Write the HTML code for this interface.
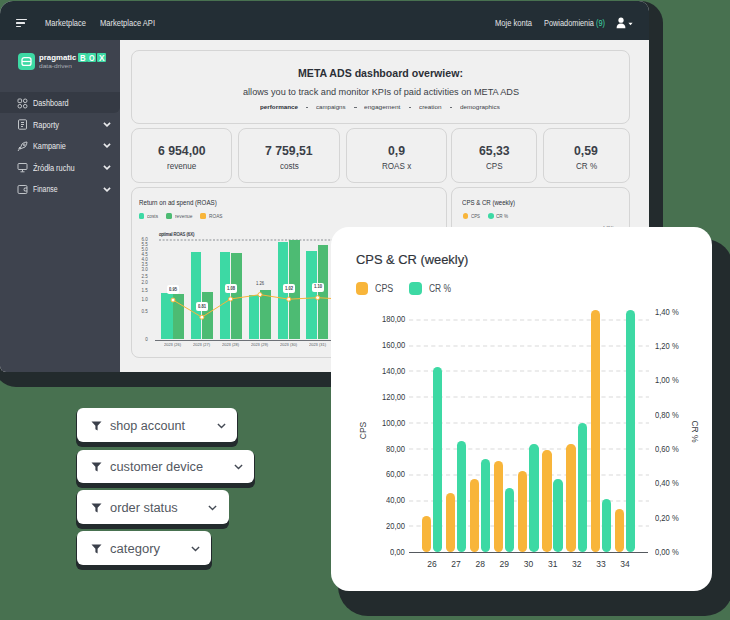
<!DOCTYPE html>
<html><head><meta charset="utf-8"><style>
html,body{margin:0;padding:0;}
body{width:730px;height:620px;overflow:hidden;position:relative;background:#487150;font-family:"Liberation Sans",sans-serif;}
.r{position:absolute;}
.t{position:absolute;white-space:nowrap;transform-origin:0 50%;}
</style></head><body>
<div class="r" style="left:-6.00px;top:30.00px;width:669.00px;height:357.00px;background:#232b2d;border-radius:0 0 22px 22px;"></div>
<div class="r" style="left:30.00px;top:1.00px;width:633.00px;height:59.00px;background:#232b2d;border-radius:0 22px 0 0;"></div>
<div class="r" style="left:0.00px;top:1.00px;width:649.00px;height:370.50px;background:#f0f0f0;border-radius:13px 10px 0 6px;overflow:hidden;"></div>
<div class="r" style="left:0.00px;top:1.00px;width:649.00px;height:39.00px;background:#232e35;border-radius:13px 10px 0 0;"></div>
<div class="r" style="left:0.00px;top:40.00px;width:119.50px;height:331.80px;background:#3e434e;border-radius:0 0 0 6px;"></div>
<div class="r" style="left:16.40px;top:19.10px;width:10.70px;height:1.30px;background:#e6e8ea;border-radius:0.6px;"></div>
<div class="r" style="left:16.40px;top:22.40px;width:8.30px;height:1.30px;background:#e6e8ea;border-radius:0.6px;"></div>
<div class="r" style="left:16.40px;top:25.70px;width:4.20px;height:1.30px;background:#e6e8ea;border-radius:0.6px;"></div>
<div class="t" style="left:45.00px;top:19.30px;font-size:8.5px;line-height:8.5px;color:#e3e6e8;font-weight:400;transform:scaleX(0.8855)">Marketplace</div>
<div class="t" style="left:100.00px;top:19.30px;font-size:8.5px;line-height:8.5px;color:#e3e6e8;font-weight:400;transform:scaleX(0.8886)">Marketplace API</div>
<div class="t" style="left:495.00px;top:19.30px;font-size:8.5px;line-height:8.5px;color:#e3e6e8;font-weight:400;transform:scaleX(0.8899)">Moje konta</div>
<div class="t" style="left:544.00px;top:19.30px;font-size:8.5px;line-height:8.5px;color:#e3e6e8;font-weight:400;transform:scaleX(0.8665)">Powiadomienia <span style="color:#3dd9a4">(9)</span></div>
<svg class="r" style="left:616px;top:17px" width="18" height="12" viewBox="0 0 18 12"><circle cx="5" cy="3.2" r="2.6" fill="#fff"/><path d="M0.6 11.2 Q0.6 6.6 5 6.6 Q9.4 6.6 9.4 11.2 Z" fill="#fff"/><path d="M12.4 5.8 L16.6 5.8 L14.5 8.3 Z" fill="#fff"/></svg>
<div class="r" style="left:18.30px;top:52.80px;width:17.00px;height:17.00px;background:#3dd9a4;border-radius:4px;"></div>
<svg class="r" style="left:18.3px;top:52.8px" width="17" height="17" viewBox="0 0 17 17"><rect x="4" y="4.6" width="9" height="7.8" rx="2.2" fill="none" stroke="#fff" stroke-width="1.3"/><line x1="4" y1="8.5" x2="13" y2="8.5" stroke="#fff" stroke-width="1.2"/></svg>
<div class="t" style="left:38.60px;top:53.87px;font-size:7.6px;line-height:7.6px;color:#ffffff;font-weight:700;transform:scaleX(1.0296)">pragmatic</div>
<div class="r" style="left:78.00px;top:53.10px;width:8.80px;height:9.00px;background:#3dd9a4;border-radius:1px;"></div>
<div class="t" style="left:79.60px;top:53.77px;font-size:8.3px;line-height:8.3px;color:#ffffff;font-weight:700;transform:scaleX(0.9342)">B</div>
<div class="r" style="left:87.45px;top:53.10px;width:8.80px;height:9.00px;background:#3dd9a4;border-radius:1px;"></div>
<div class="t" style="left:89.05px;top:53.77px;font-size:8.3px;line-height:8.3px;color:#ffffff;font-weight:700;transform:scaleX(0.8674)">O</div>
<div class="r" style="left:96.90px;top:53.10px;width:8.80px;height:9.00px;background:#3dd9a4;border-radius:1px;"></div>
<div class="t" style="left:98.50px;top:53.77px;font-size:8.3px;line-height:8.3px;color:#ffffff;font-weight:700;transform:scaleX(1.0115)">X</div>
<div class="t" style="left:38.60px;top:63.42px;font-size:6px;line-height:6px;color:#a9aeb5;font-weight:400;transform:scaleX(1.0960)">data-driven</div>
<div class="r" style="left:0.00px;top:92.40px;width:119.50px;height:20.80px;background:#353a44;border-radius:0 0 6px 0;"></div>
<div class="t" style="left:33.40px;top:99.00px;font-size:8.5px;line-height:8.5px;color:#e9eaec;font-weight:400;transform:scaleX(0.8561)">Dashboard</div>
<div class="t" style="left:33.40px;top:120.50px;font-size:8.5px;line-height:8.5px;color:#e9eaec;font-weight:400;transform:scaleX(0.8736)">Raporty</div>
<div class="t" style="left:33.40px;top:142.20px;font-size:8.5px;line-height:8.5px;color:#e9eaec;font-weight:400;transform:scaleX(0.8569)">Kampanie</div>
<div class="t" style="left:33.40px;top:163.60px;font-size:8.5px;line-height:8.5px;color:#e9eaec;font-weight:400;transform:scaleX(0.8739)">Źródła ruchu</div>
<div class="t" style="left:33.40px;top:185.30px;font-size:8.5px;line-height:8.5px;color:#e9eaec;font-weight:400;transform:scaleX(0.8102)">Finanse</div>
<svg class="r" style="left:17px;top:98px" width="11" height="11" viewBox="0 0 11 11" fill="none" stroke="#cfd2d6" stroke-width="0.9"><rect x="1" y="1" width="3.6" height="3.6" rx="0.8"/><rect x="6.4" y="1" width="3.6" height="3.6" rx="1.8"/><rect x="1" y="6.4" width="3.6" height="3.6" rx="1.8"/><rect x="6.4" y="6.4" width="3.6" height="3.6" rx="1.8"/></svg>
<svg class="r" style="left:17px;top:119px" width="11" height="11" viewBox="0 0 11 11" fill="none" stroke="#cfd2d6" stroke-width="0.9"><rect x="1.5" y="0.8" width="8" height="9.4" rx="1"/><line x1="4" y1="3.5" x2="7" y2="3.5"/><line x1="4" y1="5.5" x2="7" y2="5.5"/><line x1="4" y1="7.5" x2="6" y2="7.5"/></svg>
<svg class="r" style="left:17px;top:141px" width="11" height="11" viewBox="0 0 11 11" fill="none" stroke="#cfd2d6" stroke-width="0.9"><path d="M3 8 L5 3 Q7 1 10 1 Q10 4 8 6 L3 8 Z"/><circle cx="7.2" cy="3.8" r="0.9"/><path d="M1 10 L3 7"/><path d="M1.5 7.5 L3 6"/></svg>
<svg class="r" style="left:17px;top:162px" width="11" height="11" viewBox="0 0 11 11" fill="none" stroke="#cfd2d6" stroke-width="0.9"><rect x="1" y="1.5" width="9" height="6" rx="1"/><line x1="5.5" y1="7.5" x2="5.5" y2="9.5"/><line x1="3.5" y1="9.8" x2="7.5" y2="9.8"/></svg>
<svg class="r" style="left:17px;top:184px" width="11" height="11" viewBox="0 0 11 11" fill="none" stroke="#cfd2d6" stroke-width="0.9"><rect x="1" y="1.5" width="9" height="8" rx="1.2"/><path d="M10 4 L7.5 4 Q6.5 5.5 7.5 7 L10 7"/></svg>
<svg class="r" style="left:103px;top:121.7px" width="8" height="5" viewBox="0 0 8 5"><path d="M0.9 0.9 L4 3.9 L7.1 0.9" fill="none" stroke="#e9eaec" stroke-width="1.6"/></svg>
<svg class="r" style="left:103px;top:143.4px" width="8" height="5" viewBox="0 0 8 5"><path d="M0.9 0.9 L4 3.9 L7.1 0.9" fill="none" stroke="#e9eaec" stroke-width="1.6"/></svg>
<svg class="r" style="left:103px;top:164.8px" width="8" height="5" viewBox="0 0 8 5"><path d="M0.9 0.9 L4 3.9 L7.1 0.9" fill="none" stroke="#e9eaec" stroke-width="1.6"/></svg>
<svg class="r" style="left:103px;top:186.5px" width="8" height="5" viewBox="0 0 8 5"><path d="M0.9 0.9 L4 3.9 L7.1 0.9" fill="none" stroke="#e9eaec" stroke-width="1.6"/></svg>
<div class="r" style="left:131.40px;top:50.00px;width:498.60px;height:73.50px;background:#f0f0f0;border:1px solid #d5d5d5;border-radius:8px;box-sizing:border-box;"></div>
<div class="t" style="left:297.70px;top:67.77px;font-size:11.5px;line-height:11.5px;color:#2b2f36;font-weight:700;transform:scaleX(0.9206)">META ADS dashboard overwiew:</div>
<div class="t" style="left:242.50px;top:87.58px;font-size:9px;line-height:9px;color:#3a3e46;font-weight:400;transform:scaleX(1.0167)">allows you to track and monitor KPIs of paid activities on META ADS</div>
<div class="t" style="left:260.30px;top:104.35px;font-size:6.2px;line-height:6.2px;color:#2b2f36;font-weight:700;transform:scaleX(1.0144)">performance</div>
<div class="t" style="left:316.20px;top:104.35px;font-size:6.2px;line-height:6.2px;color:#3a3e46;font-weight:400;transform:scaleX(0.9872)">campaigns</div>
<div class="t" style="left:364.30px;top:104.35px;font-size:6.2px;line-height:6.2px;color:#3a3e46;font-weight:400;transform:scaleX(1.0559)">engagement</div>
<div class="t" style="left:418.80px;top:104.35px;font-size:6.2px;line-height:6.2px;color:#3a3e46;font-weight:400;transform:scaleX(1.0200)">creation</div>
<div class="t" style="left:459.80px;top:104.35px;font-size:6.2px;line-height:6.2px;color:#3a3e46;font-weight:400;transform:scaleX(1.0245)">demographics</div>
<div class="r" style="left:306.10px;top:106.90px;width:2.40px;height:0.70px;background:#6a6e74;"></div>
<div class="r" style="left:354.20px;top:106.90px;width:2.40px;height:0.70px;background:#6a6e74;"></div>
<div class="r" style="left:408.80px;top:106.90px;width:2.40px;height:0.70px;background:#6a6e74;"></div>
<div class="r" style="left:449.70px;top:106.90px;width:2.40px;height:0.70px;background:#6a6e74;"></div>
<div class="r" style="left:131.40px;top:127.80px;width:101.10px;height:55.60px;background:#f0f0f0;border:1px solid #d5d5d5;border-radius:8px;box-sizing:border-box;"></div>
<div class="t" style="left:158.11px;top:144.72px;font-size:12.5px;line-height:12.5px;color:#3b3f48;font-weight:700;transform:scaleX(0.9800)">6 954,00</div>
<div class="t" style="left:167.36px;top:162.00px;font-size:8.5px;line-height:8.5px;color:#3b3f48;font-weight:400;transform:scaleX(0.9500)">revenue</div>
<div class="r" style="left:238.20px;top:127.80px;width:101.50px;height:55.60px;background:#f0f0f0;border:1px solid #d5d5d5;border-radius:8px;box-sizing:border-box;"></div>
<div class="t" style="left:265.11px;top:144.72px;font-size:12.5px;line-height:12.5px;color:#3b3f48;font-weight:700;transform:scaleX(0.9800)">7 759,51</div>
<div class="t" style="left:279.53px;top:162.00px;font-size:8.5px;line-height:8.5px;color:#3b3f48;font-weight:400;transform:scaleX(0.9500)">costs</div>
<div class="r" style="left:345.80px;top:127.80px;width:101.50px;height:55.60px;background:#f0f0f0;border:1px solid #d5d5d5;border-radius:8px;box-sizing:border-box;"></div>
<div class="t" style="left:388.04px;top:144.72px;font-size:12.5px;line-height:12.5px;color:#3b3f48;font-weight:700;transform:scaleX(0.9800)">0,9</div>
<div class="t" style="left:381.97px;top:162.00px;font-size:8.5px;line-height:8.5px;color:#3b3f48;font-weight:400;transform:scaleX(0.9500)">ROAS x</div>
<div class="r" style="left:450.90px;top:127.80px;width:86.50px;height:55.60px;background:#f0f0f0;border:1px solid #d5d5d5;border-radius:8px;box-sizing:border-box;"></div>
<div class="t" style="left:478.82px;top:144.72px;font-size:12.5px;line-height:12.5px;color:#3b3f48;font-weight:700;transform:scaleX(0.9800)">65,33</div>
<div class="t" style="left:485.85px;top:162.00px;font-size:8.5px;line-height:8.5px;color:#3b3f48;font-weight:400;transform:scaleX(0.9500)">CPS</div>
<div class="r" style="left:542.80px;top:127.80px;width:86.90px;height:55.60px;background:#f0f0f0;border:1px solid #d5d5d5;border-radius:8px;box-sizing:border-box;"></div>
<div class="t" style="left:574.33px;top:144.72px;font-size:12.5px;line-height:12.5px;color:#3b3f48;font-weight:700;transform:scaleX(0.9800)">0,59</div>
<div class="t" style="left:575.71px;top:162.00px;font-size:8.5px;line-height:8.5px;color:#3b3f48;font-weight:400;transform:scaleX(0.9500)">CR %</div>
<div class="r" style="left:131.40px;top:187.20px;width:316.10px;height:170.80px;background:#f0f0f0;border:1px solid #d5d5d5;border-radius:8px;box-sizing:border-box;"></div>
<div class="r" style="left:450.80px;top:187.20px;width:179.50px;height:170.80px;background:#f0f0f0;border:1px solid #d5d5d5;border-radius:8px;box-sizing:border-box;"></div>
<div class="t" style="left:138.80px;top:199.37px;font-size:7px;line-height:7px;color:#2b2f36;font-weight:400;transform:scaleX(0.8836)">Return on ad spend (ROAS)</div>
<div class="r" style="left:138.50px;top:213.20px;width:5.50px;height:5.50px;background:#3dd9a4;border-radius:1.5px;"></div>
<div class="t" style="left:147.00px;top:213.54px;font-size:5.5px;line-height:5.5px;color:#555a62;font-weight:400;transform:scaleX(0.8569)">costs</div>
<div class="r" style="left:166.00px;top:213.20px;width:5.50px;height:5.50px;background:#4dbb73;border-radius:1.5px;"></div>
<div class="t" style="left:174.50px;top:213.54px;font-size:5.5px;line-height:5.5px;color:#555a62;font-weight:400;transform:scaleX(0.8804)">revenue</div>
<div class="r" style="left:200.00px;top:213.20px;width:5.50px;height:5.50px;background:#f8b53a;border-radius:1.5px;"></div>
<div class="t" style="left:208.50px;top:213.54px;font-size:5.5px;line-height:5.5px;color:#555a62;font-weight:400;transform:scaleX(0.8661)">ROAS</div>
<div class="t" style="left:158.70px;top:232.27px;font-size:5px;line-height:5px;color:#3b3f48;font-weight:400;-webkit-text-stroke:0.2px #3b3f48;transform:scaleX(0.8303)">optimal ROAS (6X)</div>
<svg class="r" style="left:158.7px;top:239px" width="173" height="2"><line x1="0" y1="1" x2="173" y2="1" stroke="#8a8e93" stroke-width="1" stroke-dasharray="2 1.6"/></svg>
<div class="t" style="left:141.54px;top:238.39px;font-size:4.5px;line-height:4.5px;color:#555a62;font-weight:400;transform:scaleX(1.0000)">6.0</div>
<div class="t" style="left:141.54px;top:243.19px;font-size:4.5px;line-height:4.5px;color:#555a62;font-weight:400;transform:scaleX(1.0000)">5.5</div>
<div class="t" style="left:141.54px;top:247.99px;font-size:4.5px;line-height:4.5px;color:#555a62;font-weight:400;transform:scaleX(1.0000)">5.0</div>
<div class="t" style="left:141.54px;top:252.69px;font-size:4.5px;line-height:4.5px;color:#555a62;font-weight:400;transform:scaleX(1.0000)">4.5</div>
<div class="t" style="left:141.54px;top:257.79px;font-size:4.5px;line-height:4.5px;color:#555a62;font-weight:400;transform:scaleX(1.0000)">4.0</div>
<div class="t" style="left:141.54px;top:262.79px;font-size:4.5px;line-height:4.5px;color:#555a62;font-weight:400;transform:scaleX(1.0000)">3.5</div>
<div class="t" style="left:141.54px;top:268.19px;font-size:4.5px;line-height:4.5px;color:#555a62;font-weight:400;transform:scaleX(1.0000)">3.0</div>
<div class="t" style="left:141.54px;top:274.79px;font-size:4.5px;line-height:4.5px;color:#555a62;font-weight:400;transform:scaleX(1.0000)">2.5</div>
<div class="t" style="left:141.54px;top:281.19px;font-size:4.5px;line-height:4.5px;color:#555a62;font-weight:400;transform:scaleX(1.0000)">2.0</div>
<div class="t" style="left:141.54px;top:289.09px;font-size:4.5px;line-height:4.5px;color:#555a62;font-weight:400;transform:scaleX(1.0000)">1.5</div>
<div class="t" style="left:141.54px;top:297.79px;font-size:4.5px;line-height:4.5px;color:#555a62;font-weight:400;transform:scaleX(1.0000)">1.0</div>
<div class="t" style="left:141.54px;top:309.89px;font-size:4.5px;line-height:4.5px;color:#555a62;font-weight:400;transform:scaleX(1.0000)">0.5</div>
<div class="t" style="left:145.30px;top:338.39px;font-size:4.5px;line-height:4.5px;color:#555a62;font-weight:400;transform:scaleX(1.0000)">0</div>
<div class="r" style="left:154.50px;top:339.60px;width:176.50px;height:1.00px;background:#6d7177;"></div>
<div class="r" style="left:161.40px;top:292.70px;width:11.20px;height:46.80px;background:#3dd9a4;"></div>
<div class="r" style="left:173.40px;top:294.20px;width:10.60px;height:45.30px;background:#4dbb73;"></div>
<div class="r" style="left:190.80px;top:252.30px;width:10.50px;height:87.20px;background:#3dd9a4;"></div>
<div class="r" style="left:202.10px;top:291.70px;width:10.90px;height:47.80px;background:#4dbb73;"></div>
<div class="r" style="left:219.70px;top:252.30px;width:10.30px;height:87.20px;background:#3dd9a4;"></div>
<div class="r" style="left:230.80px;top:253.30px;width:11.20px;height:86.20px;background:#4dbb73;"></div>
<div class="r" style="left:248.90px;top:295.20px;width:10.50px;height:44.30px;background:#3dd9a4;"></div>
<div class="r" style="left:260.20px;top:290.40px;width:10.70px;height:49.10px;background:#4dbb73;"></div>
<div class="r" style="left:277.80px;top:241.80px;width:10.20px;height:97.70px;background:#3dd9a4;"></div>
<div class="r" style="left:288.80px;top:240.10px;width:10.80px;height:99.40px;background:#4dbb73;"></div>
<div class="r" style="left:306.10px;top:251.20px;width:10.90px;height:88.30px;background:#3dd9a4;"></div>
<div class="r" style="left:317.80px;top:245.30px;width:10.70px;height:94.20px;background:#4dbb73;"></div>
<div class="t" style="left:164.20px;top:343.44px;font-size:4.2px;line-height:4.2px;color:#555a62;font-weight:400;transform:scaleX(0.9455)">2023 (26)</div>
<div class="t" style="left:193.40px;top:343.44px;font-size:4.2px;line-height:4.2px;color:#555a62;font-weight:400;transform:scaleX(0.9455)">2023 (27)</div>
<div class="t" style="left:222.35px;top:343.44px;font-size:4.2px;line-height:4.2px;color:#555a62;font-weight:400;transform:scaleX(0.9455)">2023 (28)</div>
<div class="t" style="left:251.40px;top:343.44px;font-size:4.2px;line-height:4.2px;color:#555a62;font-weight:400;transform:scaleX(0.9455)">2023 (29)</div>
<div class="t" style="left:280.20px;top:343.44px;font-size:4.2px;line-height:4.2px;color:#555a62;font-weight:400;transform:scaleX(0.9455)">2023 (30)</div>
<div class="t" style="left:308.80px;top:343.44px;font-size:4.2px;line-height:4.2px;color:#555a62;font-weight:400;transform:scaleX(0.9455)">2023 (31)</div>
<svg class="r" style="left:120px;top:225px" width="220" height="130"><path d="M53.0 75.0 L81.9 92.2 L110.6 74.0 L140.0 69.6 L168.7 74.2 L197.6 72.7 L212.0 73.5" fill="none" stroke="#f8b53a" stroke-width="1"/><circle cx="53.0" cy="75.0" r="2" fill="#fff" stroke="#f8b53a" stroke-width="1"/><circle cx="81.9" cy="92.2" r="2" fill="#fff" stroke="#f8b53a" stroke-width="1"/><circle cx="110.6" cy="74.0" r="2" fill="#fff" stroke="#f8b53a" stroke-width="1"/><circle cx="140.0" cy="69.6" r="2" fill="#fff" stroke="#f8b53a" stroke-width="1"/><circle cx="168.7" cy="74.2" r="2" fill="#fff" stroke="#f8b53a" stroke-width="1"/><circle cx="197.6" cy="72.7" r="2" fill="#fff" stroke="#f8b53a" stroke-width="1"/></svg>
<div class="r" style="left:167.00px;top:285.00px;width:12.00px;height:9.00px;background:#ffffff;border-radius:2px;"></div>
<div class="t" style="left:169.00px;top:287.59px;font-size:4.5px;line-height:4.5px;color:#3b3f48;font-weight:700;transform:scaleX(0.9134)">0.95</div>
<div class="r" style="left:195.90px;top:302.20px;width:12.00px;height:9.00px;background:#ffffff;border-radius:2px;"></div>
<div class="t" style="left:197.90px;top:304.79px;font-size:4.5px;line-height:4.5px;color:#3b3f48;font-weight:700;transform:scaleX(0.9134)">0.81</div>
<div class="r" style="left:224.60px;top:284.00px;width:12.00px;height:9.00px;background:#ffffff;border-radius:2px;"></div>
<div class="t" style="left:226.60px;top:286.59px;font-size:4.5px;line-height:4.5px;color:#3b3f48;font-weight:700;transform:scaleX(0.9134)">1.08</div>
<div class="t" style="left:256.00px;top:282.19px;font-size:4.5px;line-height:4.5px;color:#3b3f48;font-weight:400;transform:scaleX(0.9134)">1.26</div>
<div class="r" style="left:282.70px;top:284.20px;width:12.00px;height:9.00px;background:#ffffff;border-radius:2px;"></div>
<div class="t" style="left:284.70px;top:286.79px;font-size:4.5px;line-height:4.5px;color:#3b3f48;font-weight:700;transform:scaleX(0.9134)">1.02</div>
<div class="r" style="left:311.60px;top:282.70px;width:12.00px;height:9.00px;background:#ffffff;border-radius:2px;"></div>
<div class="t" style="left:313.60px;top:285.29px;font-size:4.5px;line-height:4.5px;color:#3b3f48;font-weight:700;transform:scaleX(0.9134)">1.10</div>
<div class="t" style="left:462.40px;top:199.07px;font-size:7px;line-height:7px;color:#2b2f36;font-weight:400;transform:scaleX(0.8679)">CPS &amp; CR (weekly)</div>
<div class="r" style="left:462.50px;top:213.20px;width:5.50px;height:5.50px;background:#f8b53a;border-radius:50%;"></div>
<div class="t" style="left:471.00px;top:213.54px;font-size:5.5px;line-height:5.5px;color:#555a62;font-weight:400;transform:scaleX(0.7958)">CPS</div>
<div class="r" style="left:487.50px;top:213.20px;width:6.00px;height:5.50px;background:#3dd9a4;border-radius:50%;"></div>
<div class="t" style="left:496.00px;top:213.54px;font-size:5.5px;line-height:5.5px;color:#555a62;font-weight:400;transform:scaleX(0.8355)">CR %</div>
<div class="t" style="left:603.00px;top:226.69px;font-size:4.5px;line-height:4.5px;color:#555a62;font-weight:400;transform:scaleX(0.7852)">1,40 %</div>
<div class="r" style="left:338.00px;top:239.00px;width:395.00px;height:377.00px;background:#232b2d;border-radius:29px 28px 28px 30px;"></div>
<div class="r" style="left:331.00px;top:227.00px;width:381.00px;height:364.00px;background:#ffffff;border-radius:18px;"></div>
<div class="t" style="left:355.50px;top:252.77px;font-size:13.5px;line-height:13.5px;color:#30343b;font-weight:400;-webkit-text-stroke:0.2px #30343b;transform:scaleX(0.9544)">CPS &amp; CR (weekly)</div>
<div class="r" style="left:355.50px;top:282.00px;width:12.90px;height:13.00px;background:#f8b53a;border-radius:4px;"></div>
<div class="t" style="left:374.70px;top:283.54px;font-size:10px;line-height:10px;color:#464b53;font-weight:400;transform:scaleX(0.8900)">CPS</div>
<div class="r" style="left:409.00px;top:282.00px;width:13.00px;height:13.00px;background:#3dd9a4;border-radius:4px;"></div>
<div class="t" style="left:429.00px;top:283.54px;font-size:10px;line-height:10px;color:#464b53;font-weight:400;transform:scaleX(0.8425)">CR %</div>
<svg class="r" style="left:409.2px;top:525.37px" width="240" height="2"><line x1="0" y1="1" x2="240" y2="1" stroke="#d9d9d9" stroke-width="1.1" stroke-dasharray="4.2 3.2"/></svg>
<svg class="r" style="left:409.2px;top:499.54px" width="240" height="2"><line x1="0" y1="1" x2="240" y2="1" stroke="#d9d9d9" stroke-width="1.1" stroke-dasharray="4.2 3.2"/></svg>
<svg class="r" style="left:409.2px;top:473.71px" width="240" height="2"><line x1="0" y1="1" x2="240" y2="1" stroke="#d9d9d9" stroke-width="1.1" stroke-dasharray="4.2 3.2"/></svg>
<svg class="r" style="left:409.2px;top:447.88px" width="240" height="2"><line x1="0" y1="1" x2="240" y2="1" stroke="#d9d9d9" stroke-width="1.1" stroke-dasharray="4.2 3.2"/></svg>
<svg class="r" style="left:409.2px;top:422.05px" width="240" height="2"><line x1="0" y1="1" x2="240" y2="1" stroke="#d9d9d9" stroke-width="1.1" stroke-dasharray="4.2 3.2"/></svg>
<svg class="r" style="left:409.2px;top:396.22px" width="240" height="2"><line x1="0" y1="1" x2="240" y2="1" stroke="#d9d9d9" stroke-width="1.1" stroke-dasharray="4.2 3.2"/></svg>
<svg class="r" style="left:409.2px;top:370.39px" width="240" height="2"><line x1="0" y1="1" x2="240" y2="1" stroke="#d9d9d9" stroke-width="1.1" stroke-dasharray="4.2 3.2"/></svg>
<svg class="r" style="left:409.2px;top:344.56px" width="240" height="2"><line x1="0" y1="1" x2="240" y2="1" stroke="#d9d9d9" stroke-width="1.1" stroke-dasharray="4.2 3.2"/></svg>
<svg class="r" style="left:409.2px;top:318.73px" width="240" height="2"><line x1="0" y1="1" x2="240" y2="1" stroke="#d9d9d9" stroke-width="1.1" stroke-dasharray="4.2 3.2"/></svg>
<div class="t" style="left:390.16px;top:548.86px;font-size:8.2px;line-height:8.2px;color:#333840;font-weight:400;transform:scaleX(0.9300)">0,00</div>
<div class="t" style="left:385.92px;top:523.03px;font-size:8.2px;line-height:8.2px;color:#333840;font-weight:400;transform:scaleX(0.9300)">20,00</div>
<div class="t" style="left:385.92px;top:497.20px;font-size:8.2px;line-height:8.2px;color:#333840;font-weight:400;transform:scaleX(0.9300)">40,00</div>
<div class="t" style="left:385.92px;top:471.37px;font-size:8.2px;line-height:8.2px;color:#333840;font-weight:400;transform:scaleX(0.9300)">60,00</div>
<div class="t" style="left:385.92px;top:445.54px;font-size:8.2px;line-height:8.2px;color:#333840;font-weight:400;transform:scaleX(0.9300)">80,00</div>
<div class="t" style="left:381.67px;top:419.71px;font-size:8.2px;line-height:8.2px;color:#333840;font-weight:400;transform:scaleX(0.9300)">100,00</div>
<div class="t" style="left:381.67px;top:393.88px;font-size:8.2px;line-height:8.2px;color:#333840;font-weight:400;transform:scaleX(0.9300)">120,00</div>
<div class="t" style="left:381.67px;top:368.05px;font-size:8.2px;line-height:8.2px;color:#333840;font-weight:400;transform:scaleX(0.9300)">140,00</div>
<div class="t" style="left:381.67px;top:342.22px;font-size:8.2px;line-height:8.2px;color:#333840;font-weight:400;transform:scaleX(0.9300)">160,00</div>
<div class="t" style="left:381.67px;top:316.39px;font-size:8.2px;line-height:8.2px;color:#333840;font-weight:400;transform:scaleX(0.9300)">180,00</div>
<div class="r" style="left:409.20px;top:551.70px;width:239.20px;height:1.20px;background:#55595f;"></div>
<div class="t" style="left:655.20px;top:548.86px;font-size:8.2px;line-height:8.2px;color:#333840;font-weight:400;transform:scaleX(0.9300)">0,00 %</div>
<div class="t" style="left:655.20px;top:514.56px;font-size:8.2px;line-height:8.2px;color:#333840;font-weight:400;transform:scaleX(0.9300)">0,20 %</div>
<div class="t" style="left:655.20px;top:480.26px;font-size:8.2px;line-height:8.2px;color:#333840;font-weight:400;transform:scaleX(0.9300)">0,40 %</div>
<div class="t" style="left:655.20px;top:445.96px;font-size:8.2px;line-height:8.2px;color:#333840;font-weight:400;transform:scaleX(0.9300)">0,60 %</div>
<div class="t" style="left:655.20px;top:411.66px;font-size:8.2px;line-height:8.2px;color:#333840;font-weight:400;transform:scaleX(0.9300)">0,80 %</div>
<div class="t" style="left:655.20px;top:377.36px;font-size:8.2px;line-height:8.2px;color:#333840;font-weight:400;transform:scaleX(0.9300)">1,00 %</div>
<div class="t" style="left:655.20px;top:343.06px;font-size:8.2px;line-height:8.2px;color:#333840;font-weight:400;transform:scaleX(0.9300)">1,20 %</div>
<div class="t" style="left:655.20px;top:308.76px;font-size:8.2px;line-height:8.2px;color:#333840;font-weight:400;transform:scaleX(0.9300)">1,40 %</div>
<div class="t" style="left:355px;top:426px;font-size:8.5px;line-height:9px;color:#3b3f48;transform:rotate(-90deg);transform-origin:center">CPS</div>
<div class="t" style="left:683px;top:427px;font-size:8.5px;line-height:9px;color:#3b3f48;transform:rotate(90deg);transform-origin:center">CR %</div>
<div class="r" style="left:421.50px;top:516.40px;width:9.40px;height:36.00px;background:#f8b53a;border-radius:4.7px;"></div>
<div class="r" style="left:432.60px;top:366.60px;width:9.40px;height:185.80px;background:#3dd9a4;border-radius:4.7px;"></div>
<div class="t" style="left:427.17px;top:560.10px;font-size:8.5px;line-height:8.5px;color:#333840;font-weight:400;transform:scaleX(1.0000)">26</div>
<div class="r" style="left:445.65px;top:492.50px;width:9.40px;height:59.90px;background:#f8b53a;border-radius:4.7px;"></div>
<div class="r" style="left:456.75px;top:441.00px;width:9.40px;height:111.40px;background:#3dd9a4;border-radius:4.7px;"></div>
<div class="t" style="left:451.32px;top:560.10px;font-size:8.5px;line-height:8.5px;color:#333840;font-weight:400;transform:scaleX(1.0000)">27</div>
<div class="r" style="left:469.80px;top:479.00px;width:9.40px;height:73.40px;background:#f8b53a;border-radius:4.7px;"></div>
<div class="r" style="left:480.90px;top:459.00px;width:9.40px;height:93.40px;background:#3dd9a4;border-radius:4.7px;"></div>
<div class="t" style="left:475.47px;top:560.10px;font-size:8.5px;line-height:8.5px;color:#333840;font-weight:400;transform:scaleX(1.0000)">28</div>
<div class="r" style="left:493.95px;top:461.20px;width:9.40px;height:91.20px;background:#f8b53a;border-radius:4.7px;"></div>
<div class="r" style="left:505.05px;top:487.60px;width:9.40px;height:64.80px;background:#3dd9a4;border-radius:4.7px;"></div>
<div class="t" style="left:499.62px;top:560.10px;font-size:8.5px;line-height:8.5px;color:#333840;font-weight:400;transform:scaleX(1.0000)">29</div>
<div class="r" style="left:518.10px;top:470.50px;width:9.40px;height:81.90px;background:#f8b53a;border-radius:4.7px;"></div>
<div class="r" style="left:529.20px;top:444.20px;width:9.40px;height:108.20px;background:#3dd9a4;border-radius:4.7px;"></div>
<div class="t" style="left:523.77px;top:560.10px;font-size:8.5px;line-height:8.5px;color:#333840;font-weight:400;transform:scaleX(1.0000)">30</div>
<div class="r" style="left:542.25px;top:449.70px;width:9.40px;height:102.70px;background:#f8b53a;border-radius:4.7px;"></div>
<div class="r" style="left:553.35px;top:479.30px;width:9.40px;height:73.10px;background:#3dd9a4;border-radius:4.7px;"></div>
<div class="t" style="left:547.92px;top:560.10px;font-size:8.5px;line-height:8.5px;color:#333840;font-weight:400;transform:scaleX(1.0000)">31</div>
<div class="r" style="left:566.40px;top:444.20px;width:9.40px;height:108.20px;background:#f8b53a;border-radius:4.7px;"></div>
<div class="r" style="left:577.50px;top:422.70px;width:9.40px;height:129.70px;background:#3dd9a4;border-radius:4.7px;"></div>
<div class="t" style="left:572.07px;top:560.10px;font-size:8.5px;line-height:8.5px;color:#333840;font-weight:400;transform:scaleX(1.0000)">32</div>
<div class="r" style="left:590.55px;top:310.40px;width:9.40px;height:242.00px;background:#f8b53a;border-radius:4.7px;"></div>
<div class="r" style="left:601.65px;top:498.50px;width:9.40px;height:53.90px;background:#3dd9a4;border-radius:4.7px;"></div>
<div class="t" style="left:596.22px;top:560.10px;font-size:8.5px;line-height:8.5px;color:#333840;font-weight:400;transform:scaleX(1.0000)">33</div>
<div class="r" style="left:614.70px;top:508.90px;width:9.40px;height:43.50px;background:#f8b53a;border-radius:4.7px;"></div>
<div class="r" style="left:625.80px;top:310.40px;width:9.40px;height:242.00px;background:#3dd9a4;border-radius:4.7px;"></div>
<div class="t" style="left:620.37px;top:560.10px;font-size:8.5px;line-height:8.5px;color:#333840;font-weight:400;transform:scaleX(1.0000)">34</div>
<div class="r" style="left:76.30px;top:409.30px;width:161.50px;height:37.50px;background:#232b2d;border-radius:6px;"></div>
<div class="r" style="left:77.00px;top:407.80px;width:160.10px;height:33.80px;background:#ffffff;border-radius:6px;"></div>
<svg class="r" style="left:91px;top:420.7px" width="11" height="10" viewBox="0 0 11 10"><path d="M0.5 0.6 L10.5 0.6 L6.6 4.8 L6.6 9.4 L4.4 8.2 L4.4 4.8 Z" fill="#3a3f4a"/></svg>
<div class="t" style="left:110.30px;top:419.74px;font-size:12px;line-height:12px;color:#535861;font-weight:400;transform:scaleX(1.0506)">shop account</div>
<svg class="r" style="left:216.5px;top:422.8px" width="9" height="6" viewBox="0 0 9 6"><path d="M0.9 0.9 L4.5 4.4 L8.1 0.9" fill="none" stroke="#444a54" stroke-width="1.4"/></svg>
<div class="r" style="left:76.30px;top:451.00px;width:178.40px;height:37.00px;background:#232b2d;border-radius:6px;"></div>
<div class="r" style="left:77.00px;top:449.50px;width:177.00px;height:33.30px;background:#ffffff;border-radius:6px;"></div>
<svg class="r" style="left:91px;top:462.1px" width="11" height="10" viewBox="0 0 11 10"><path d="M0.5 0.6 L10.5 0.6 L6.6 4.8 L6.6 9.4 L4.4 8.2 L4.4 4.8 Z" fill="#3a3f4a"/></svg>
<div class="t" style="left:110.30px;top:461.19px;font-size:12px;line-height:12px;color:#535861;font-weight:400;transform:scaleX(1.0644)">customer device</div>
<svg class="r" style="left:234.0px;top:464.2px" width="9" height="6" viewBox="0 0 9 6"><path d="M0.9 0.9 L4.5 4.4 L8.1 0.9" fill="none" stroke="#444a54" stroke-width="1.4"/></svg>
<div class="r" style="left:76.30px;top:491.40px;width:153.20px;height:37.50px;background:#232b2d;border-radius:6px;"></div>
<div class="r" style="left:77.00px;top:489.90px;width:151.80px;height:33.80px;background:#ffffff;border-radius:6px;"></div>
<svg class="r" style="left:91px;top:502.8px" width="11" height="10" viewBox="0 0 11 10"><path d="M0.5 0.6 L10.5 0.6 L6.6 4.8 L6.6 9.4 L4.4 8.2 L4.4 4.8 Z" fill="#3a3f4a"/></svg>
<div class="t" style="left:110.30px;top:501.84px;font-size:12px;line-height:12px;color:#535861;font-weight:400;transform:scaleX(1.0684)">order status</div>
<svg class="r" style="left:208.0px;top:504.9px" width="9" height="6" viewBox="0 0 9 6"><path d="M0.9 0.9 L4.5 4.4 L8.1 0.9" fill="none" stroke="#444a54" stroke-width="1.4"/></svg>
<div class="r" style="left:76.30px;top:532.80px;width:135.40px;height:37.00px;background:#232b2d;border-radius:6px;"></div>
<div class="r" style="left:77.00px;top:531.30px;width:134.00px;height:33.30px;background:#ffffff;border-radius:6px;"></div>
<svg class="r" style="left:91px;top:544.0px" width="11" height="10" viewBox="0 0 11 10"><path d="M0.5 0.6 L10.5 0.6 L6.6 4.8 L6.6 9.4 L4.4 8.2 L4.4 4.8 Z" fill="#3a3f4a"/></svg>
<div class="t" style="left:110.30px;top:542.99px;font-size:12px;line-height:12px;color:#535861;font-weight:400;transform:scaleX(1.0863)">category</div>
<svg class="r" style="left:191.0px;top:546.1px" width="9" height="6" viewBox="0 0 9 6"><path d="M0.9 0.9 L4.5 4.4 L8.1 0.9" fill="none" stroke="#444a54" stroke-width="1.4"/></svg>
</body></html>
